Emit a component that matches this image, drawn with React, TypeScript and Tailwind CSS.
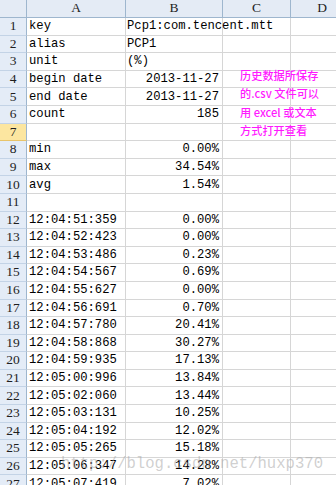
import React from "react";

type Row = { a?: string; b?: string; right?: boolean };

const rows: Row[] = [
  { a: "key", b: "Pcp1:com.tencent.mtt" },
  { a: "alias", b: "PCP1" },
  { a: "unit", b: "(%)" },
  { a: "begin date", b: "2013-11-27", right: true },
  { a: "end date", b: "2013-11-27", right: true },
  { a: "count", b: "185", right: true },
  {},
  { a: "min", b: "0.00%", right: true },
  { a: "max", b: "34.54%", right: true },
  { a: "avg", b: "1.54%", right: true },
  {},
  { a: "12:04:51:359", b: "0.00%", right: true },
  { a: "12:04:52:423", b: "0.00%", right: true },
  { a: "12:04:53:486", b: "0.23%", right: true },
  { a: "12:04:54:567", b: "0.69%", right: true },
  { a: "12:04:55:627", b: "0.00%", right: true },
  { a: "12:04:56:691", b: "0.70%", right: true },
  { a: "12:04:57:780", b: "20.41%", right: true },
  { a: "12:04:58:868", b: "30.27%", right: true },
  { a: "12:04:59:935", b: "17.13%", right: true },
  { a: "12:05:00:996", b: "13.84%", right: true },
  { a: "12:05:02:060", b: "13.44%", right: true },
  { a: "12:05:03:131", b: "10.25%", right: true },
  { a: "12:05:04:192", b: "12.02%", right: true },
  { a: "12:05:05:265", b: "15.18%", right: true },
  { a: "12:05:06:347", b: "14.28%", right: true },
  { a: "12:05:07:419", b: "7.02%", right: true },
];

const mono = { fontFamily: '"Liberation Mono", "DejaVu Sans Mono", monospace' };
const serif = { fontFamily: '"Liberation Serif", "DejaVu Serif", serif' };

export default function App() {
  return (
    <div className="relative w-[336px] h-[485px] overflow-hidden bg-white">
      {/* column header */}
      <div
        className="flex h-[18px] bg-[#e4ebf5] border-b border-[#9eb6ce] text-[13.5px] text-[#1e1e1e]"
        style={serif}
      >
        <div className="w-[27px] shrink-0 border-r border-[#9eb6ce]" />
        <div className="w-[99px] shrink-0 border-r border-[#9eb6ce] flex items-center justify-center">A</div>
        <div className="w-[97px] shrink-0 border-r border-[#9eb6ce] flex items-center justify-center">B</div>
        <div className="w-[68px] shrink-0 border-r border-[#9eb6ce] flex items-center justify-center">C</div>
        <div className="w-[62px] shrink-0 flex items-center justify-center">D</div>
      </div>

      {rows.map((r, i) => {
        const sel = i === 6;
        return (
          <div key={i} className="flex h-[17.6px]">
            <div
              className={
                sel
                  ? "w-[27px] shrink-0 border-r border-b border-r-[#9eb6ce] border-b-[#e8c46a] bg-[#fce6a0] flex items-center justify-center text-[13.5px] text-[#1e1e1e]"
                  : "w-[27px] shrink-0 border-r border-b border-r-[#9eb6ce] border-b-[#c3d3e6] bg-[#e4ecf7] flex items-center justify-center text-[13.5px] text-[#1e1e1e]"
              }
              style={serif}
            >
              {i + 1}
            </div>
            <div
              className="w-[99px] shrink-0 border-r border-b border-[#d6d6d6] flex items-center pl-[2px] text-[12.2px] text-black whitespace-nowrap overflow-visible"
              style={mono}
            >
              {r.a}
            </div>
            <div
              className={
                r.right
                  ? "w-[97px] shrink-0 border-r border-b border-[#d6d6d6] flex items-center justify-end pr-[3px] text-[12.2px] text-black whitespace-nowrap"
                  : "w-[97px] shrink-0 border-r border-b border-[#d6d6d6] flex items-center pl-[1px] text-[12.2px] text-black whitespace-nowrap overflow-visible"
              }
              style={mono}
            >
              {r.b}
            </div>
            <div className="w-[68px] shrink-0 border-r border-b border-[#d6d6d6]" />
            <div className="w-[62px] shrink-0 border-b border-[#d6d6d6]" />
          </div>
        );
      })}

      {/* text box note */}
      <div
        className="absolute left-[240px] top-[65.5px] text-[11.2px] font-medium leading-[18.6px] text-[#ff1aff] whitespace-nowrap"
        style={{ fontFamily: '"Noto Sans CJK SC", "Noto Sans", sans-serif' }}
      >
        <div>历史数据所保存</div>
        <div>的.csv 文件可以</div>
        <div>用 excel 或文本</div>
        <div>方式打开查看</div>
      </div>

      {/* watermark */}
      <div
        className="absolute left-[61px] top-[455px] text-[15.6px] leading-[18px] text-[#a8a8a8]/55 whitespace-nowrap pointer-events-none"
        style={mono}
      >
        http://blog.csdn.net/huxp370
      </div>
    </div>
  );
}
